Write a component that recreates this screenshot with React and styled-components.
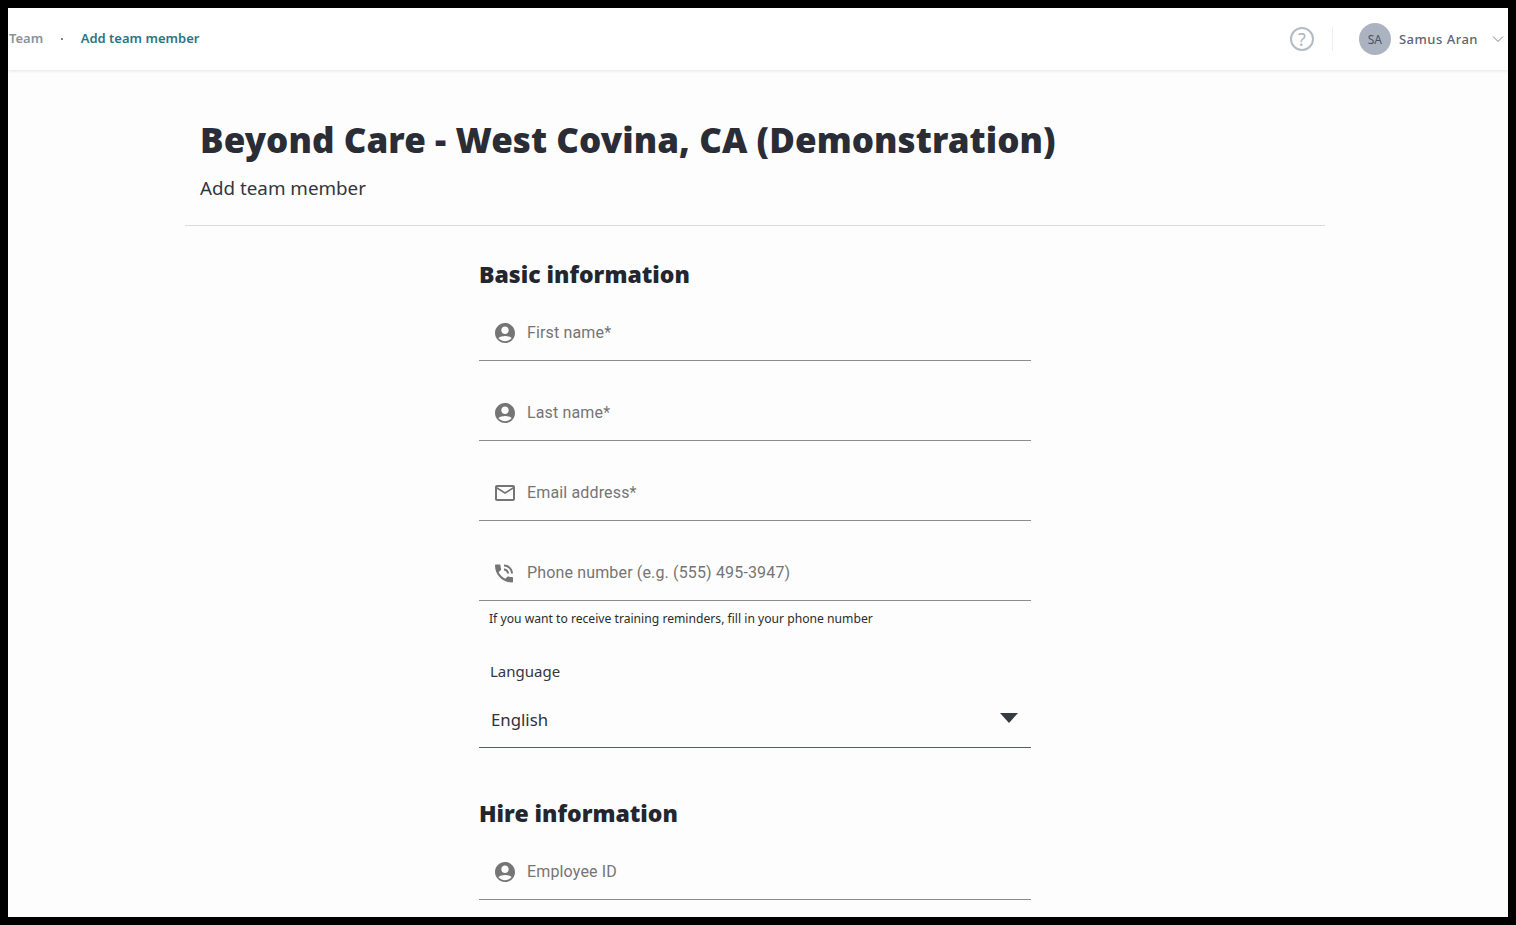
import React from 'react'
import styled, { createGlobalStyle } from 'styled-components'

const GlobalStyle = createGlobalStyle`
  html, body {
    margin: 0;
    padding: 0;
    background: #000;
  }
  body {
    font-family: "Noto Sans", "Open Sans", sans-serif;
  }
`

const PersonIcon = () => (
  <svg width="24" height="24" viewBox="0 0 24 24" fill="#757575">
    <path d="M12 2C6.48 2 2 6.48 2 12s4.48 10 10 10 10-4.48 10-10S17.52 2 12 2zm0 3.6c2.1 0 3.7 1.6 3.7 3.7s-1.6 3.7-3.7 3.700-3.700-1.600-3.700-3.700S9.900 5.600 12 5.600zm0 14.600c-2.700 0-5.100-1.200-6.700-3.200 1.400-1.300 4.300-2.100 6.700-2.100s5.300.8 6.700 2.100c-1.600 2-4 3.200-6.700 3.200z" />
  </svg>
)

const MailIcon = () => (
  <svg width="24" height="24" viewBox="0 0 24 24" fill="#757575">
    <path d="M20 4H4c-1.100 0-2 .9-2 2v12c0 1.100.9 2 2 2h16c1.100 0 2-.9 2-2V6c0-1.100-.9-2-2-2zm0 14H4V8l8 5 8-5v10zm-8-7L4 6h16l-8 5z" />
  </svg>
)

const PhoneIcon = () => (
  <svg width="24" height="24" viewBox="1 -0.5 24 24" fill="#757575">
    <path d="M15 12h2c0-2.760-2.240-5-5-5v2c1.660 0 3 1.340 3 3zm4 0h2c0-4.970-4.030-9-9-9v2c3.870 0 7 3.130 7 7zm1 3.500c-1.250 0-2.450-.2-3.570-.57-.35-.11-.74-.03-1.020.24l-2.200 2.200c-2.830-1.440-5.150-3.750-6.590-6.590l2.200-2.210c.28-.26.36-.65.25-1C8.700 6.450 8.500 5.250 8.500 4c0-.55-.45-1-1-1H4c-.55 0-1 .45-1 1 0 9.390 7.610 17 17 17 .55 0 1-.45 1-1v-3.500c0-.55-.45-1-1-1z" />
  </svg>
)

const Page = styled.div`
  margin: 8px;
  height: 909px;
  background: #fdfdfd;
  overflow: hidden;
`

const TopBar = styled.header`
  height: 62px;
  box-sizing: border-box;
  display: flex;
  align-items: center;
  justify-content: space-between;
  background: #fff;
  box-shadow: 0 1px 3px rgba(60, 70, 90, 0.14);
  padding: 0 4px 0 1px;
`

const Crumbs = styled.nav`
  display: flex;
  align-items: center;
  padding-bottom: 2px;
  font-size: 13px;
  font-weight: 600;
`

const Crumb = styled.span`
  color: ${p => (p.$active ? '#2e7480' : '#8b929c')};
`

const Dot = styled.span`
  width: 2px;
  height: 2px;
  margin: 2px 17.5px 0 18px;
  background: #7d8590;
`

const UserArea = styled.div`
  display: flex;
  align-items: center;
`

const HelpButton = styled.div`
  width: 20px;
  height: 20px;
  border: 2px solid #b4bbc4;
  border-radius: 50%;
  display: flex;
  align-items: center;
  justify-content: center;
  color: #aeb5bf;
  font-size: 18px;
`

const Separator = styled.div`
  width: 1px;
  height: 24px;
  margin: 0 26px 0 18px;
  background: #eceef0;
`

const Avatar = styled.div`
  width: 32px;
  height: 32px;
  border-radius: 50%;
  background: #acb3c0;
  color: #4a5260;
  font-size: 12px;
  display: flex;
  align-items: center;
  justify-content: center;
  margin-right: 8px;
`

const UserName = styled.span`
  font-size: 13px;
  font-weight: 500;
  letter-spacing: 0.5px;
  color: #5d6570;
  margin-right: 14px;
`

const Main = styled.main`
  width: 1140px;
  margin-left: 177px;
`

const PageHead = styled.div`
  padding: 47px 15px 23px;
  border-bottom: 1px solid #dcdcdc;
`

const Title = styled.h1`
  margin: 0;
  font-size: 35px;
  line-height: 46px;
  font-weight: 900;
  letter-spacing: 0.07px;
  color: #2a2d36;
`

const Subtitle = styled.p`
  margin: 11px 0 0;
  font-size: 18.8px;
  line-height: 28px;
  color: #33363f;
`

const Form = styled.form`
  width: 552px;
  margin-left: 294px;
  padding-top: 31px;
`

const SectionTitle = styled.h2`
  margin: 0;
  font-size: 23px;
  line-height: 34px;
  font-weight: 900;
  color: #23262e;
`

const Field = styled.div`
  height: 54px;
  margin-top: ${p => (p.$first ? '16px' : '26px')};
  box-sizing: border-box;
  display: flex;
  align-items: center;
  gap: 10px;
  padding: 0 0 2px 14px;
  border-bottom: 1px solid #8c8c8c;
  font-family: Roboto, sans-serif;
  font-size: 16px;
  letter-spacing: 0.15px;
  color: #757575;
`

const HelpText = styled.p`
  margin: 9px 0 0 10px;
  font-size: 12.15px;
  line-height: 17px;
  color: #2b2b2b;
`

const SelectLabel = styled.div`
  margin: 33px 0 0 11px;
  font-size: 15px;
  line-height: 22px;
  color: #33363f;
`

const SelectBox = styled.div`
  height: 66px;
  box-sizing: border-box;
  margin-bottom: 48px;
  padding: 9px 12px 0;
  display: flex;
  align-items: center;
  justify-content: space-between;
  border-bottom: 1px solid #4f6265;
  font-size: 16.8px;
  color: #2f323a;
`

const Caret = styled.span`
  width: 0;
  height: 0;
  margin: 0 1px 2px 0;
  border-left: 9px solid transparent;
  border-right: 9px solid transparent;
  border-top: 10px solid #363a45;
`

export default function App() {
  return (
    <>
      <GlobalStyle />
      <Page>
        <TopBar>
          <Crumbs>
            <Crumb>Team</Crumb>
            <Dot />
            <Crumb $active>Add team member</Crumb>
          </Crumbs>
          <UserArea>
            <HelpButton>?</HelpButton>
            <Separator />
            <Avatar>SA</Avatar>
            <UserName>Samus Aran</UserName>
            <svg width="12" height="12" viewBox="0 0 12 12" fill="none" stroke="#7b838e" strokeWidth="1">
              <path d="M1 3.500l5 5 5-5" />
            </svg>
          </UserArea>
        </TopBar>
        <Main>
          <PageHead>
            <Title>Beyond Care - West Covina, CA (Demonstration)</Title>
            <Subtitle>Add team member</Subtitle>
          </PageHead>
          <Form>
            <SectionTitle>Basic information</SectionTitle>
            <Field $first><PersonIcon />First name*</Field>
            <Field><PersonIcon />Last name*</Field>
            <Field><MailIcon />Email address*</Field>
            <Field><PhoneIcon />Phone number (e.g. (555) 495-3947)</Field>
            <HelpText>If you want to receive training reminders, fill in your phone number</HelpText>
            <SelectLabel>Language</SelectLabel>
            <SelectBox>English<Caret /></SelectBox>
            <SectionTitle>Hire information</SectionTitle>
            <Field $first><PersonIcon />Employee ID</Field>
          </Form>
        </Main>
      </Page>
    </>
  )
}
